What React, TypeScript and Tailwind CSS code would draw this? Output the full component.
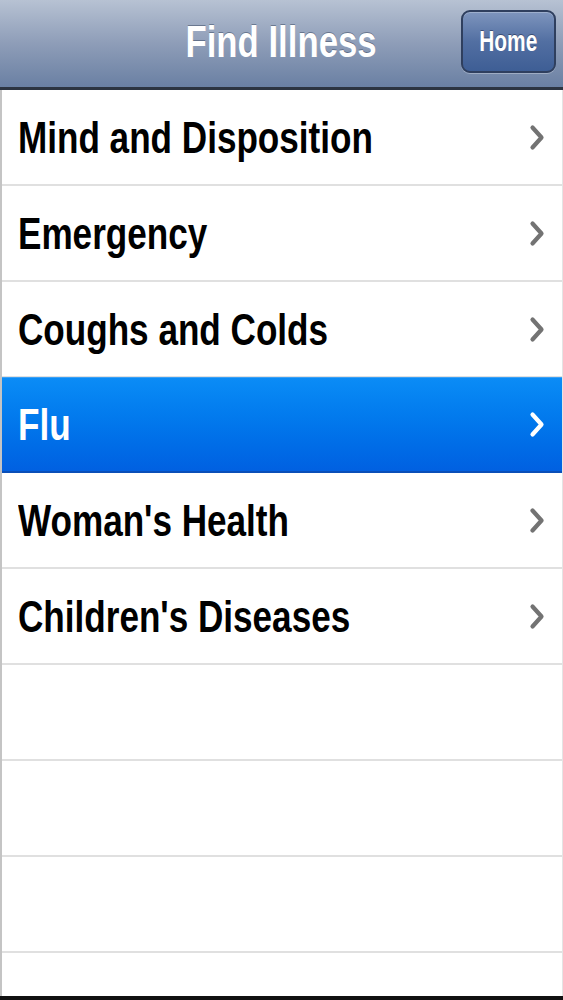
import React from "react";

const items = [
  "Mind and Disposition",
  "Emergency",
  "Coughs and Colds",
  "Flu",
  "Woman's Health",
  "Children's Diseases",
];

const Chevron = ({ color }: { color: string }) => (
  <svg width="16" height="27" viewBox="0 0 16 27" fill="none">
    <polyline
      points="3.5,3.5 12.5,13.5 3.5,23.5"
      stroke={color}
      strokeWidth="4.2"
      strokeLinecap="round"
      strokeLinejoin="round"
    />
  </svg>
);

const App: React.FC = () => {
  const selected = "Flu";

  return (
    <div className="h-[1000px] w-full flex flex-col bg-white font-['Liberation_Sans',Arial,sans-serif]">
      {/* Navigation bar */}
      <div className="h-[90px] shrink-0 flex items-center relative bg-linear-to-b from-[#b7c2d3] via-[#8e9db8] to-[#6a80a3] border-b-[3px] border-[#2c3441]">
        <div className="flex-1 flex justify-center">
          <span className="inline-block text-[44px] leading-none font-bold text-white scale-x-[0.79] -mt-[4px] [text-shadow:0_-1px_0_rgba(40,55,80,0.45)]">
            Find Illness
          </span>
        </div>
        <button className="absolute right-[7px] top-[10px] w-[95px] h-[63px] rounded-[9px] border-2 border-[#2f3f5e] bg-linear-to-b from-[#7e95bd] via-[#526fa2] to-[#3e5e95] shadow-[inset_0_1px_0_rgba(255,255,255,0.25),0_1px_0_rgba(255,255,255,0.3)] flex items-center justify-center">
          <span className="inline-block text-[29px] leading-none font-bold text-white scale-x-[0.72] [text-shadow:0_-1px_0_rgba(20,30,60,0.5)]">
            Home
          </span>
        </button>
      </div>

      {/* Table */}
      <div className="flex-1 flex flex-col border-l-2 border-r border-l-[#c4c4c4] border-r-[#e4e4e4]">
        {items.map((item) => {
          const active = item === selected;
          return (
            <div
              key={item}
              className={
                active
                  ? "h-[96px] shrink-0 flex items-center justify-between pl-[16px] pr-[17px] bg-linear-to-b from-[#0b8cf6] to-[#0160e1] border-t border-b-2 border-t-[#3aa0f5] border-b-[#0a4fb8] -mt-px"
                  : "h-[96px] shrink-0 flex items-center justify-between pl-[16px] pr-[17px] border-b-2 border-[#e0e0e0]"
              }
            >
              <span
                className={
                  active
                    ? "inline-block origin-left text-[45px] leading-none font-bold text-white scale-x-[0.78]"
                    : "inline-block origin-left text-[45px] leading-none font-bold text-black scale-x-[0.78]"
                }
              >
                {item}
              </span>
              <Chevron color={active ? "#ffffff" : "#737373"} />
            </div>
          );
        })}
        {[0, 1, 2].map((i) => (
          <div key={i} className="h-[96px] shrink-0 border-b-2 border-[#e0e0e0]" />
        ))}
        <div className="flex-1" />
      </div>
      <div className="h-[4px] shrink-0 bg-[#111111]" />
    </div>
  );
};

export default App;
